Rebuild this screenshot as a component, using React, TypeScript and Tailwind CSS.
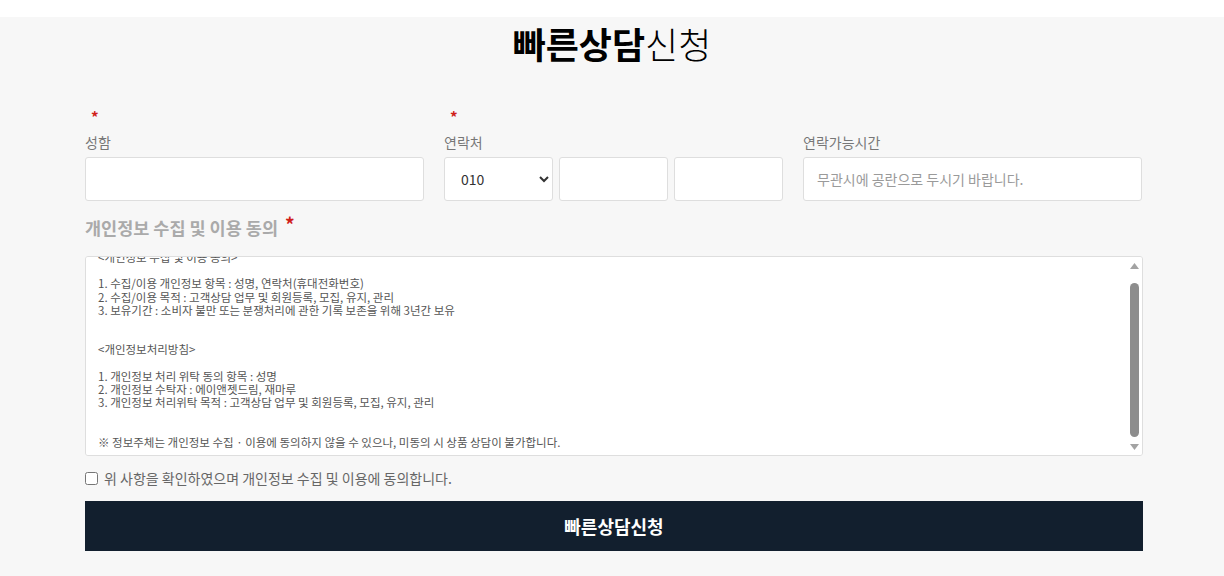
import React, { useEffect, useRef } from "react";

const TERMS = `<개인정보 수집 및 이용 동의>

1. 수집/이용 개인정보 항목 : 성명, 연락처(휴대전화번호)
2. 수집/이용 목적 : 고객상담 업무 및 회원등록, 모집, 유지, 관리
3. 보유기간 : 소비자 불만 또는 분쟁처리에 관한 기록 보존을 위해 3년간 보유


<개인정보처리방침>

1. 개인정보 처리 위탁 동의 항목 : 성명
2. 개인정보 수탁자 : 에이앤젯드림, 재마루
3. 개인정보 처리위탁 목적 : 고객상담 업무 및 회원등록, 모집, 유지, 관리


※ 정보주체는 개인정보 수집 · 이용에 동의하지 않을 수 있으나, 미동의 시 상품 상담이 불가합니다.
`;

const font = "font-['Noto_Sans_CJK_KR','Noto_Sans',sans-serif]";

function Star() {
  return <span className="text-[#d0201a] text-[15px] font-bold leading-none">*</span>;
}

export default function App() {
  const ta = useRef<HTMLTextAreaElement>(null);
  useEffect(() => {
    if (ta.current) ta.current.scrollTop = 20;
  }, []);

  const inputCls =
    "h-[44px] w-full rounded-[3px] border border-[#dedede] bg-white px-[13px] text-[14px] text-[#333] outline-none placeholder:text-[#9a9a9a]";

  return (
    <div className={`min-h-screen bg-white ${font}`}>
      <div className="h-[17px] bg-white" />
      <div className="bg-[#f7f7f7] pb-[25px]">
        <h2 className="pt-[3px] text-center text-[36px] leading-[46px] text-black">
          <span className="font-bold">빠른상담</span>
          <span className="font-light">신청</span>
        </h2>

        <div className="ml-[85px] w-[1058px] pt-[38px]">
          <div className="grid grid-cols-[339px_339px_339px] gap-x-[20px]">
            <div className="flex flex-col">
              <div className="h-[20px] pl-[6px]">
                <Star />
              </div>
              <label className="mt-[5px] text-[14px] leading-[26px] text-[#777]">성함</label>
              <input className={`${inputCls} mt-[2px]`} />
            </div>
            <div className="flex flex-col">
              <div className="h-[20px] pl-[6px]">
                <Star />
              </div>
              <label className="mt-[5px] text-[14px] leading-[26px] text-[#777]">연락처</label>
              <div className="mt-[2px] flex gap-[6px]">
                <select
                  defaultValue="010"
                  className="h-[44px] w-[109px] shrink-0 rounded-[3px] border border-[#dedede] bg-white pl-[12px] pr-[4px] text-[14px] text-[#333] outline-none"
                >
                  <option>010</option>
                  <option>011</option>
                  <option>016</option>
                  <option>017</option>
                  <option>019</option>
                </select>
                <input className={inputCls} />
                <input className={inputCls} />
              </div>
            </div>
            <div className="flex flex-col">
              <div className="h-[20px]" />
              <label className="mt-[5px] text-[14px] leading-[26px] text-[#777]">연락가능시간</label>
              <input className={`${inputCls} mt-[2px]`} placeholder="무관시에 공란으로 두시기 바랍니다." />
            </div>
          </div>

          <div className="mt-[14px] flex items-start gap-[7px] text-[17.5px] font-bold leading-[26px] text-[#aaa]">
            <span>개인정보 수집 및 이용 동의</span>
            <span className="relative -top-[4px]">
              <span className="text-[#d0201a] text-[19px] font-bold">*</span>
            </span>
          </div>

          <div className="relative mt-[14px]">
            <textarea
              ref={ta}
              readOnly
              value={TERMS}
              className="block h-[200px] w-full resize-none rounded-[3px] border border-[#dedede] bg-white px-[12px] py-[14px] text-[11.5px] leading-[13.2px] text-[#555] outline-none [scrollbar-width:none]"
            />
            <div className="pointer-events-none absolute right-[4px] top-[7px] bottom-[6px] flex w-[9px] flex-col items-center">
              <svg width="9" height="6" viewBox="0 0 9 6" className="block">
                <path d="M4.5 0L9 6H0z" fill="#a3a3a3" />
              </svg>
              <div className="mt-[14px] h-[154px] w-[9px] rounded-full bg-[#8d8d8d]" />
              <div className="flex-1" />
              <svg width="9" height="6" viewBox="0 0 9 6" className="block">
                <path d="M0 0H9L4.5 6z" fill="#a3a3a3" />
              </svg>
            </div>
          </div>

          <label className="mt-[13px] flex items-center gap-[6px] text-[14px] leading-[18px] text-[#666]">
            <input type="checkbox" className="m-0 h-[13px] w-[13px]" />
            <span>위 사항을 확인하였으며 개인정보 수집 및 이용에 동의합니다.</span>
          </label>

          <button className="mt-[14px] block h-[50px] w-full bg-[#121f2e] text-[18px] font-bold text-white">
            빠른상담신청
          </button>
        </div>
      </div>
    </div>
  );
}
